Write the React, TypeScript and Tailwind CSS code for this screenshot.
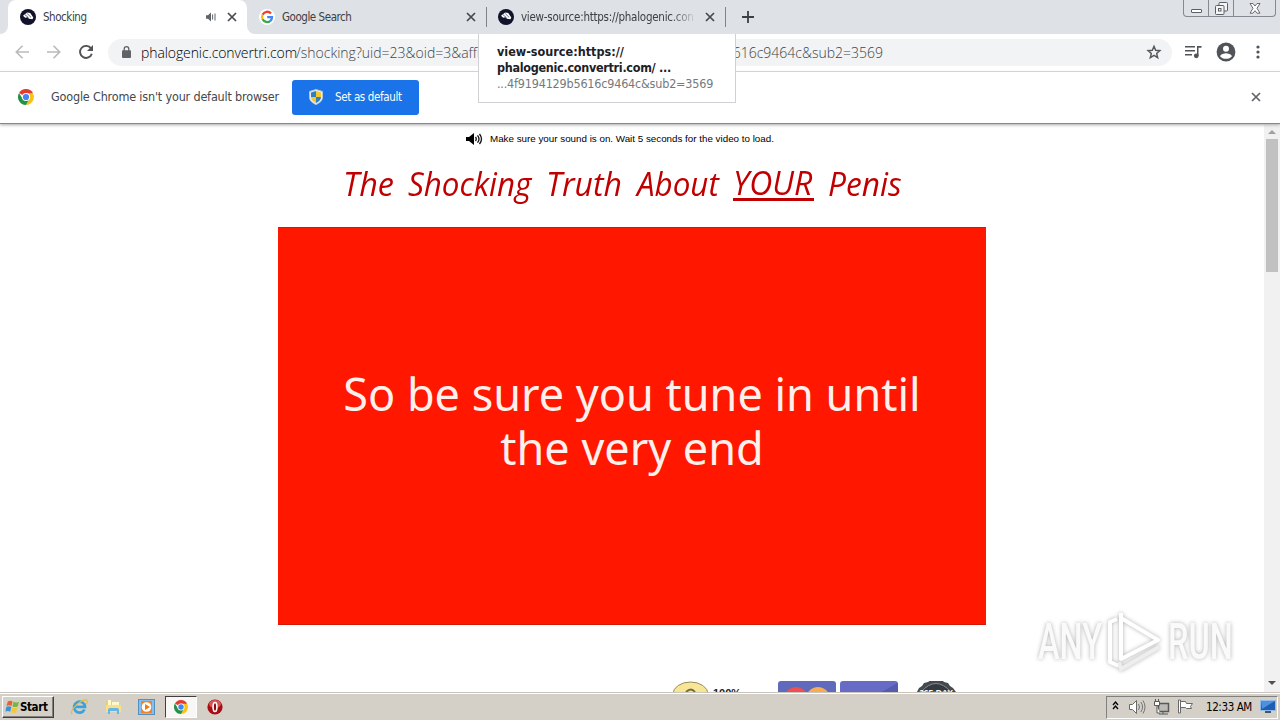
import React from "react";

const UI = "font-['DejaVu_Sans_Condensed','DejaVu_Sans',sans-serif]";

function Favicon() {
  return (
    <svg width="16" height="16" viewBox="0 0 16 16" className="shrink-0">
      <circle cx="8" cy="8" r="8" fill="#12122b" />
      <path d="M3 6.8 7.2 3.4 10.2 4 13.3 8.5 12.5 10.3 9 9.8 7.5 8.2 5.2 8.8z" fill="#fff" />
      <path d="m5 5.8 3.5 2.8M7.2 4.5l3.8 3.8" stroke="#12122b" strokeWidth=".6" />
    </svg>
  );
}

function GoogleIcon() {
  return (
    <svg width="16" height="16" viewBox="0 0 16 16" className="shrink-0">
      <circle cx="8" cy="8" r="8" fill="#fff" />
      <g fill="none" strokeWidth="2.3">
        <path d="M12 4.5A5 5 0 0 0 3.6 5.8" stroke="#ea4335" />
        <path d="M3.6 5.8a5 5 0 0 0 0 4.5" stroke="#fbbc05" />
        <path d="M3.6 10.3a5 5 0 0 0 7.8 1.5" stroke="#34a853" />
        <path d="M11.4 11.8A5 5 0 0 0 13 8.2H8.2" stroke="#4285f4" />
      </g>
    </svg>
  );
}

function ChromeIcon({ size = 16 }: { size?: number }) {
  return (
    <svg width={size} height={size} viewBox="0 0 16 16" className="shrink-0">
      <path d="M8 8 1.07 4A8 8 0 0 1 14.93 4z" fill="#e33b2e" />
      <path d="M8 4.2h6.93A8 8 0 0 1 8 16L11.3 9.9z" fill="#fbc116" />
      <path d="M1.07 4A8 8 0 0 0 8 16l3.3-6.1L4.7 9.9z" fill="#229342" />
      <circle cx="8" cy="8" r="4" fill="#fff" />
      <circle cx="8" cy="8" r="3.1" fill="#4285f4" />
    </svg>
  );
}

function Cross({ color = "#45484c" }: { color?: string }) {
  return (
    <svg width="10" height="10" viewBox="0 0 10 10" className="shrink-0">
      <path d="m1 1 8 8M9 1 1 9" stroke={color} strokeWidth="1.7" />
    </svg>
  );
}

function TabStrip() {
  return (
    <div className="flex h-[34px] bg-[#dee1e6] text-[11.5px] text-[#3c4043]">
      <div className="w-2 bg-white">
        <div className="h-full rounded-br-lg bg-[#dee1e6]" />
      </div>
      <div className="flex w-[239px] items-center rounded-t-lg bg-white pl-3">
        <Favicon />
        <span className="ml-[7px] w-[163px] pt-px tracking-[-0.45px]">Shocking</span>
        <svg width="10" height="10" viewBox="0 0 10 10" className="mr-[11px]">
          <path d="M0 3.3h2L5 .5v9L2 6.7H0z" fill="#5f6368" />
          <path d="M6.6 2.5v5M9 1.5v7" stroke="#5f6368" strokeWidth="1" />
        </svg>
        <Cross />
      </div>
      <div className="w-2 bg-white">
        <div className="h-full rounded-bl-lg bg-[#dee1e6]" />
      </div>
      <div className="flex w-[232px] items-center pl-1">
        <GoogleIcon />
        <span className="ml-[7px] w-[184px] pt-px tracking-[-0.45px]">Google Search</span>
        <Cross />
      </div>
      <div className="flex w-[239px] items-center">
        <i className="mr-[11px] -ml-px h-5 w-px bg-[#808388]" />
        <Favicon />
        <span className="ml-[7px] w-[176px] overflow-hidden pt-px whitespace-nowrap tracking-[-0.25px] [mask-image:linear-gradient(to_right,#000_150px,transparent)]">
          view-source:https://phalogenic.con
        </span>
        <span className="ml-2 flex">
          <Cross />
        </span>
        <i className="ml-[10px] h-5 w-px bg-[#808388]" />
      </div>
      <svg width="12" height="12" viewBox="0 0 12 12" className="mt-[11px] ml-[16px]">
        <path d="M6 0v12M0 6h12" stroke="#3c4043" strokeWidth="1.8" />
      </svg>
      <div className="mr-[4px] ml-auto flex h-[17px] w-[93px] rounded-b border border-t-0 border-[#858991]">
        <div className="flex w-[25px] items-end justify-center border-r border-[#858991] pb-[3px]">
          <i className="h-[4px] w-[11px] rounded-[1px] border border-[#5b5e64] bg-white" />
        </div>
        <div className="flex w-[25px] justify-center border-r border-[#858991] pt-[2px]">
          <svg width="13" height="13" viewBox="0 0 13 13" fill="#f5f5f5" stroke="#5b5e64">
            <rect x="4" y=".5" width="8.5" height="8.5" rx="1" />
            <rect x=".5" y="3.5" width="8.5" height="9" rx="1" />
            <rect x="3.5" y="6.5" width="2.5" height="2.5" />
          </svg>
        </div>
        <div className="flex flex-1 justify-center pt-[3px]">
          <svg width="12" height="11" viewBox="0 0 12 11">
            <path d="M1 .5h3l2 2.5 2-2.5h3L8 5.3l3 4.9H8L6 7.7l-2 2.5H1l3-4.9z" fill="#fff" stroke="#5b5e64" strokeWidth=".9" />
          </svg>
        </div>
      </div>
    </div>
  );
}

function Toolbar() {
  return (
    <div className="flex h-[38px] items-center border-b border-[#d9dbde] bg-white pb-px pl-[15px]">
      <svg width="14" height="14" viewBox="0 0 14 14" fill="none" stroke="#b8babc" strokeWidth="1.6" className="mr-[18px]">
        <path d="M14 7H1.5M7.5.8 1.3 7l6.2 6.2" />
      </svg>
      <svg width="14" height="14" viewBox="0 0 14 14" fill="none" stroke="#b8babc" strokeWidth="1.6" className="mr-[18px]">
        <path d="M0 7h12.5M6.5.8 12.7 7l-6.2 6.2" />
      </svg>
      <svg width="14" height="14" viewBox="0 0 14 14" className="mr-[15px]">
        <path d="M11.8 3.2A6 6 0 1 0 12.8 8.7" fill="none" stroke="#505357" strokeWidth="1.9" />
        <path d="M14 0v6H8z" fill="#505357" />
      </svg>
      <div className="flex h-[27px] w-[1064px] items-center rounded-full bg-[#f1f3f4] pl-[14px] font-['Open_Sans',sans-serif] text-[14px] font-light whitespace-nowrap text-[#404449]">
        <svg width="9" height="12" viewBox="0 0 9 12" className="mr-[10px] shrink-0">
          <path d="M2.2 5V3a2.3 2.3 0 0 1 4.6 0v2" fill="none" stroke="#5f6368" strokeWidth="1.3" />
          <rect y="4.3" width="9" height="7.7" rx="1" fill="#5f6368" />
        </svg>
        <span className="w-[155px] shrink-0 tracking-[-0.1px] text-black">phalogenic.convertri.com</span>
        <span className="w-[190px] shrink-0">/shocking?uid=23&amp;oid=3&amp;affi</span>
        <span className="w-[397px] shrink-0 text-right">616c9464c&amp;sub2=3569</span>
        <svg width="16" height="16" viewBox="0 0 24 24" className="mr-[10px] ml-auto" fill="none" stroke="#55595d" strokeWidth="2.2">
          <path d="m12 3.5 2.5 6 6.300.5-4.800 4.200 1.500 6.200-5.500-3.300-5.500 3.300 1.500-6.200-4.800-4.200 6.300-.5z" />
        </svg>
      </div>
      <svg width="17" height="14" viewBox="0 0 17 14" className="ml-[13px]" fill="#505357">
        <path d="M0 1h10v1.6H0zM0 5h10v1.6H0zM0 9h7v1.6H0zM12 1h4.5v1.8h-3v8H12z" />
        <circle cx="11.3" cy="10.8" r="2.4" />
      </svg>
      <svg width="20" height="20" viewBox="0 0 20 20" className="ml-[14px]">
        <circle cx="10" cy="10" r="9.4" fill="#505357" />
        <circle cx="10" cy="6.8" r="3" fill="#fff" />
        <path d="M4 14.2c1-2.2 4-3 6-3s5 .8 6 3c-2.5 3.4-9.5 3.4-12 0z" fill="#fff" />
      </svg>
      <svg width="4" height="14" viewBox="0 0 4 14" className="ml-[20px]" fill="#505357">
        <circle cx="2" cy="2" r="1.6" />
        <circle cx="2" cy="7" r="1.6" />
        <circle cx="2" cy="12" r="1.6" />
      </svg>
    </div>
  );
}

function InfoBar() {
  return (
    <div className="z-10 flex h-[52px] items-center border-b border-[#85878a] bg-white pb-px pl-[18px] shadow-[0_1px_3px_#aaa]">
      <ChromeIcon />
      <span className="ml-[17px] w-[241px] text-[12.5px] tracking-[-0.18px] whitespace-nowrap text-[#44474b]">
        Google Chrome isn't your default browser
      </span>
      <button className="flex h-[35px] w-[127px] items-center rounded-[3px] bg-[#1a73e8] pl-[17px] text-[11.5px] tracking-[-0.35px] whitespace-nowrap text-white">
        <svg width="14" height="16" viewBox="0 0 14 16" className="mr-[12px]">
          <path d="M7 .5 13.5 2.5V8c0 4-3 6-6.5 7.5C3.5 14 .5 12 .5 8V2.5z" fill="#e8eef2" stroke="#b8c5cf" />
          <path d="M7 2v6H2V3.6zM7 8h5c0 3-2.5 4.8-5 6z" fill="#2f7fc4" />
          <path d="M7 2v6h5V3.6zM7 8H2c0 3 2.5 4.8 5 6z" fill="#f4c92e" />
        </svg>
        <span className="pt-[2px]">Set as default</span>
      </button>
      <span className="mr-[19px] ml-auto">
        <Cross color="#606367" />
      </span>
    </div>
  );
}

function Tooltip() {
  return (
    <div className="absolute top-[34px] left-[478px] z-20 h-[69px] w-[258px] border border-t-0 border-[#cfd1d4] bg-white pt-[10px] pl-[18px] text-[12.5px] leading-4 whitespace-nowrap">
      <p className="font-bold text-[#202124]">view-source:https://</p>
      <p className="font-bold tracking-[-0.3px] text-[#202124]">phalogenic.convertri.com/ ...</p>
      <p className="tracking-[-0.2px] text-[#75797d]">...4f9194129b5616c9464c&amp;sub2=3569</p>
    </div>
  );
}

function Watermark() {
  return (
    <div className="absolute top-[607px] left-[1038px] flex h-[70px] w-[200px] items-center font-['Roboto',sans-serif] text-[50px] font-medium text-[#fafafa] drop-shadow-[0_0_2px_#b0b0b0]">
      <span className="w-[65px] shrink-0">
        <span className="inline-block origin-left scale-x-[0.65]">ANY</span>
      </span>
      <svg width="62" height="66" viewBox="0 0 60 66" fill="none" stroke="#fff" strokeWidth="4" strokeLinejoin="round" className="shrink-0">
        <path d="M17 4v46l37-19-37-22" />
        <path d="M13 10 6 13v40l9 4" />
        <path d="m15 53 2 7 38-22" stroke="#eee" />
      </svg>
      <span className="ml-[3px]">
        <span className="inline-block origin-left scale-x-[0.65]">RUN</span>
      </span>
    </div>
  );
}

function Page() {
  return (
    <div className="flex h-[568px] bg-white">
      <main className="relative flex w-[1264px] flex-col overflow-hidden">
        <div className="mt-[8px] ml-[466px] flex h-[14px] items-center font-['Liberation_Sans',sans-serif] text-[9.8px] text-black">
          <svg width="17" height="12" viewBox="0 0 17 12" className="mr-[7px]">
            <path d="M0 4h3l5-4v12L3 8H0z" />
            <path d="M9.5 4q1.5 2 0 4M11.5 2.3q3 3.7 0 7.4M13.5 1q4 5 0 10" fill="none" stroke="#111" strokeWidth="1.3" />
          </svg>
          <span className="whitespace-nowrap">Make sure your sound is on. Wait 5 seconds for the video to load.</span>
        </div>
        <h1 className="mt-[13px] ml-[343px] flex h-[50px] items-center font-['Open_Sans',sans-serif] text-[33px] text-[#c00000] italic">
          <span className="w-[65px]">
            <span className="inline-block origin-left scale-x-[0.98]">The</span>
          </span>
          <span className="w-[138px]">
            <span className="inline-block origin-left scale-x-[0.95]">Shocking</span>
          </span>
          <span className="w-[91px]">
            <span className="inline-block origin-left scale-x-[0.97]">Truth</span>
          </span>
          <span className="w-[96px]">
            <span className="inline-block origin-left scale-x-[0.95]">About</span>
          </span>
          <span className="mt-[1px] w-[81px] border-b-[3px] border-[#c00000] leading-[30px]">
            <span className="inline-block origin-left scale-x-[0.97]">YOUR</span>
          </span>
          <span className="ml-[14px]">
            <span className="inline-block origin-left scale-x-[0.96]">Penis</span>
          </span>
        </h1>
        <div className="mt-[18px] ml-[278px] flex h-[398px] w-[708px] flex-col items-center border-y border-[#d31808] bg-[#ff1700] pt-[139px] text-center font-['Noto_Sans',sans-serif] text-[45px] leading-[54px] whitespace-nowrap text-[#fff0ec]">
          <p>
            So be sure you tune in until
            <br />
            the very end
          </p>
        </div>
        <div className="mt-[56px] ml-[672px] flex h-[11px] items-start overflow-hidden">
          <svg width="37" height="11" viewBox="0 0 37 11">
            <ellipse cx="18.5" cy="13" rx="17.5" ry="12" fill="#f8e697" stroke="#9a8c5a" />
            <path d="M14 11q5-5 9 0" fill="none" stroke="#786b40" strokeWidth="2" />
          </svg>
          <b className="mt-[6px] ml-[4px] w-[65px] font-['Liberation_Sans',sans-serif] text-[11px] leading-[12px] text-[#222]">100%</b>
          <div className="h-[20px] w-[58px] overflow-hidden rounded-t-[3px] bg-[#5f6abc]">
            <div className="mt-[6px] flex justify-center">
              <i className="-mr-[1px] size-6 rounded-full bg-[#ef4f50]" />
              <i className="-ml-[1px] size-6 rounded-full bg-[#f5ad55]" />
            </div>
          </div>
          <div className="ml-1 h-[20px] w-[58px] rounded-t-[3px] bg-[linear-gradient(150deg,#686bc6_65%,#555cae_66%)]" />
          <svg width="42" height="14" viewBox="0 0 42 14" className="-mt-[2px] ml-[17px] shrink-0">
            <path d="m2 13 2-4 3-2 2-3 4-1 3-2 3 1 2-1 3 1 3-1 2 2 4 1 2 3 3 2 3 4z" fill="#454a50" />
            <path d="M6 13q15-17 30 0z" fill="#343a40" stroke="#858a8e" />
            <text x="21" y="17" textAnchor="middle" fill="#fff" className="font-['Liberation_Sans',sans-serif] text-[8.5px] font-bold">365 DAY</text>
          </svg>
        </div>
      </main>
      <div className="flex w-4 flex-col items-center bg-[#f1f1f1]">
        <svg width="8" height="4" viewBox="0 0 8 4" className="mt-[6px]">
          <path d="m4 0 4 4H0z" fill="#a0a0a0" />
        </svg>
        <i className="mt-[5px] h-[133px] w-3 bg-[#c1c1c1]" />
        <svg width="8" height="4" viewBox="0 0 8 4" className="mt-auto mb-[7px]">
          <path d="M0 0h8L4 4z" fill="#505050" />
        </svg>
      </div>
    </div>
  );
}

function Taskbar() {
  return (
    <footer className="flex h-7 items-center border-t border-[#c8c4be] bg-[#d4d0c8] pt-px pl-[2px] shadow-[inset_0_1px_#fff]">
      <button className="flex h-[22px] w-[52px] items-center border border-t-white border-r-[#404040] border-b-[#404040] border-l-white pl-[2px] text-[11.5px] font-bold tracking-[-0.4px] text-black shadow-[inset_-1px_-1px_#808080]">
        <svg width="15" height="16" viewBox="0 0 16 16" className="shrink-0">
          <path d="M3 2q3-1.5 5 0L7 7Q4.5 5.5 1.5 7z" fill="#e8602c" />
          <path d="M9 2.5q3 1.5 6 0L13.5 7.5q-3 1.2-5.5 0z" fill="#79b543" />
          <path d="M1.3 8q3-1.5 5.5 0L5.5 13q-2.5-1.5-5 0z" fill="#3b91d2" />
          <path d="M7.8 8.5q3 1.2 5.5 0L12 13.5q-3 1.2-5.5 0z" fill="#f5c63a" />
        </svg>
        <span className="pt-[2px]">Start</span>
      </button>
      <svg width="18" height="18" viewBox="0 0 18 18" className="ml-[16px]">
        <path d="M14.5 11.5A5.5 5.5 0 1 1 15 8.8H5" fill="none" stroke="#38a3df" strokeWidth="2.7" />
        <path d="M2 16C-1 12 12 1 16.5 2q1.5 1 0 4" fill="none" stroke="#e8b944" strokeWidth="1.3" />
      </svg>
      <svg width="17" height="16" viewBox="0 0 17 16" className="ml-[17px]">
        <path d="M1 2h6l1 2h7v9H1z" fill="#eccf6c" />
        <path d="M3 1h3v5H3zM7 3h7v4H7z" fill="#fff9cc" />
        <path d="M1 6h15v7H1z" fill="#f5df8b" />
        <path d="M3 15v-4q0-2 2-2h7q2 0 2 2v4h-2v-3H5v3z" fill="#63b6e6" />
      </svg>
      <svg width="17" height="17" viewBox="0 0 17 17" className="ml-[16px]">
        <rect x=".5" y=".5" width="16" height="15" fill="#8abde7" stroke="#548fbd" />
        <path d="M3 2h11v12H3z" fill="#f58220" />
        <circle cx="8.5" cy="8" r="4.8" fill="#fff" />
        <path d="m7 5 5 3-5 3z" fill="#ef7b12" />
      </svg>
      <div className="ml-[10px] flex h-[22px] w-[32px] items-center justify-center border border-t-[#404040] border-r-white border-b-white border-l-[#404040] bg-[#f8f7f6]">
        <ChromeIcon size={14} />
      </div>
      <svg width="16" height="16" viewBox="0 0 16 16" className="ml-[10px]">
        <circle cx="8" cy="8" r="7.6" fill="#a70e14" />
        <ellipse cx="8" cy="5" rx="6" ry="4" fill="#d75556" />
        <ellipse cx="8" cy="8" rx="1.9" ry="4.5" fill="#8e0910" stroke="#fff" strokeWidth="1.6" />
      </svg>
      <div className="mr-[2px] ml-auto flex h-[23px] w-[172px] items-center border border-t-[#808080] border-r-white border-b-white border-l-[#808080] pl-[5px]">
        <svg width="7" height="9" viewBox="0 0 7 9" fill="none" stroke="#000" strokeWidth="1.3" className="-mt-[3px]">
          <path d="m1 4 2.5-3L6 4M1 8l2.5-3L6 8" />
        </svg>
        <svg width="17" height="16" viewBox="0 0 17 16" className="ml-[10px]" fill="#fff" stroke="#696969">
          <path d="M.5 5.5h3l4-4v13l-4-4h-3z" />
          <path d="M9.5 5q2 3 0 6M11.8 3q3.5 5 0 10M14 1.5q4 6.5 0 13" fill="none" strokeWidth=".9" />
        </svg>
        <svg width="17" height="16" viewBox="0 0 17 16" className="ml-[7px]" stroke="#595959">
          <path d="M5.5 4.5h10v8h-10z" fill="#bdbbb6" strokeWidth="1.5" />
          <path d="M10 13v2M6 15h9" />
          <path d="M1.5 2.5h5v4h-5zM2.5 0v2M5.5 0v2M4 7v7h3" fill="#fff" />
        </svg>
        <svg width="17" height="16" viewBox="0 0 17 16" className="ml-[7px]" fill="#fff" stroke="#686868">
          <path d="M1.5 1v13h2V1zM3.5 2.5h5l1 2h6l-2 3 1 2h-5l-1-1h-5z" />
        </svg>
        <span className="ml-[12px] w-[54px] pt-[2px] text-[11.5px] tracking-[-0.4px] whitespace-nowrap text-black">12:33 AM</span>
        <svg width="16" height="14" viewBox="0 0 16 14">
          <path d="M.5.5h15v10H.5z" fill="#1d5eb4" stroke="#93bae8" />
          <path d="M1 1h14L2 9z" fill="#4b91dc" />
          <path d="M5 11h6v2H5z" fill="#3e5770" />
        </svg>
      </div>
    </footer>
  );
}

export default function App() {
  return (
    <div className={`relative flex h-[720px] w-[1280px] flex-col overflow-hidden bg-white ${UI}`}>
      <TabStrip />
      <Toolbar />
      <InfoBar />
      <Page />
      <Taskbar />
      <Tooltip />
      <Watermark />
    </div>
  );
}
